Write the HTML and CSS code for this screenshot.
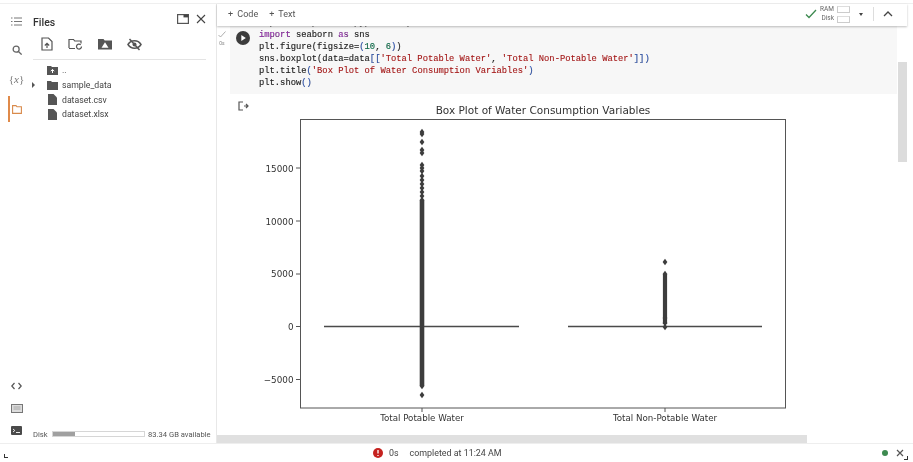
FILE: index.html
```html
<!DOCTYPE html>
<html lang="en">
<head>
<meta charset="utf-8">
<title>Files - Notebook</title>
<link rel="stylesheet" href="styles.css">
</head>
<body>
<div class="app">
  <div class="workspace">
    <nav class="rail">
      <div class="rail-top">
        <span class="rail-btn"><svg width="11" height="9" viewBox="0 0 11 9"><path d="M3 1h8M3 4.500h8M3 8h8M0 1h1.500M0 4.500h1.500M0 8h1.500" class="ic-line"/></svg></span>
        <span class="rail-btn"><svg width="10" height="10" viewBox="0 0 14 14"><circle cx="5.800" cy="5.800" r="4.200" class="ic-search"/><path d="M9 9l4.500 4.500" class="ic-search"/></svg></span>
        <span class="rail-btn rail-var">{<i>x</i>}</span>
        <span class="rail-btn rail-active"><svg width="10" height="9" viewBox="0 0 10 9"><path d="M.6 .6h3.400l1 1.200h4.400v6.600H.6z" class="ic-orange"/></svg></span>
      </div>
      <div class="rail-bottom">
        <span class="rail-btn"><svg width="11" height="8" viewBox="0 0 11 8"><path d="M3.500 1L.8 4l2.700 3M7.500 1l2.700 3-2.700 3" class="ic-line-b"/></svg></span>
        <span class="rail-btn"><svg width="12" height="9" viewBox="0 0 12 9"><rect x=".5" y=".5" width="11" height="8" class="ic-box"/><path d="M2.500 3h7M2.500 5h7" class="ic-thin"/></svg></span>
        <span class="rail-btn"><svg width="11" height="9" viewBox="0 0 11 9"><rect width="11" height="9" rx="1" fill="#4a4a4a"/><path d="M2 3l1.800 1.500L2 6" class="ic-white"/><path d="M5 6.500h4" class="ic-white"/></svg></span>
      </div>
    </nav>
    <aside class="panel">
      <header class="panel-head">
        <span class="panel-title">Files</span>
        <span class="panel-actions">
          <svg width="12" height="10" viewBox="0 0 12 10"><rect x=".6" y=".6" width="10.800" height="8.800" class="ic-box-d"/><rect x="6.500" y=".6" width="4.900" height="2.800" fill="#444"/></svg>
          <svg width="10" height="10" viewBox="0 0 10 10"><path d="M1 1l8 8M9 1l-8 8" class="ic-close"/></svg>
        </span>
      </header>
      <div class="file-tools">
        <svg width="12" height="14" viewBox="0 0 12 14"><path d="M1 1h6.500L11 4.500V13H1z" class="ic-box-d"/><path d="M6 11V6.500M3.800 8.500L6 6.300l2.200 2.200" class="ic-box-d"/></svg>
        <svg width="15" height="12" viewBox="0 0 15 12"><path d="M1 10V1.500h4.500l1.200 1.500H13v2.500M7 10.500H1" class="ic-box-d"/><path d="M13.500 8.500a2.500 2.500 0 1 1-.8-1.800" class="ic-box-d"/></svg>
        <svg width="14" height="12" viewBox="0 0 14 12"><path d="M0 1h5.500l1.200 1.500H14V11.500H0z" fill="#555"/><path d="M7 4.300L10.500 9.800h-7z" fill="#fff"/></svg>
        <svg width="15" height="13" viewBox="0 0 15 13"><path d="M1 6.500c3-5 10-5 13 0-3 5-10 5-13 0z" class="ic-eye"/><circle cx="7.500" cy="6.500" r="2" fill="#555"/><path d="M2.500 1l10 11" class="ic-eye"/></svg>
      </div>
      <ul class="tree">
        <li class="tree-row"><span class="twist"></span><svg width="11" height="9" viewBox="0 0 11 9"><path d="M0 0h4l1 1h6v8H0z" fill="#555"/><path d="M5.500 7V3.500M3.800 5.200L5.500 3.400l1.700 1.800" stroke="#fff" fill="none"/></svg><span>..</span></li>
        <li class="tree-row"><span class="twist twist-on"></span><svg width="11" height="9" viewBox="0 0 11 9"><path d="M0 0h4l1 1h6v8H0z" fill="#555"/></svg><span>sample_data</span></li>
        <li class="tree-row"><span class="twist"></span><svg width="9" height="11" viewBox="0 0 9 11"><path d="M0 0h5.500L9 3.500V11H0z" fill="#555"/></svg><span>dataset.csv</span></li>
        <li class="tree-row"><span class="twist"></span><svg width="9" height="11" viewBox="0 0 9 11"><path d="M0 0h5.500L9 3.500V11H0z" fill="#555"/></svg><span>dataset.xlsx</span></li>
      </ul>
      <div class="disk">
        <span class="disk-label">Disk</span>
        <span class="disk-bar"><span class="disk-fill"></span></span>
        <span>83.34 GB available</span>
      </div>
    </aside>
    <main class="notebook">
      <header class="toolbar">
        <span class="tb-btn">+ Code</span>
        <span class="tb-btn">+ Text</span>
        <span class="tb-right">
          <svg width="12" height="10" viewBox="0 0 12 10"><path d="M1 5.500l3 3L11 1" class="ic-check"/></svg>
          <span class="res-labels"><span>RAM</span><span>Disk</span></span>
          <span class="res-bars"><span class="res-bar"></span><span class="res-bar"></span></span>
          <span class="caret"></span>
          <span class="tb-divider"></span>
          <svg width="10" height="6" viewBox="0 0 10 6"><path d="M1 5l4-4 4 4" class="ic-chev"/></svg>
        </span>
      </header>
      <div class="scroller">
        <div class="content">
          <section class="cell-row">
            <div class="exec"><svg width="8" height="7" viewBox="0 0 8 7"><path d="M.5 4l2 2L7.500.5" class="ic-thin"/></svg><span>0s</span></div>
            <div class="cell">
              <div class="run"><svg width="14" height="14" viewBox="0 0 14 14"><circle cx="7" cy="7" r="7" fill="#3c3c3c"/><path d="M5.300 4l4.500 3-4.500 3z" fill="#fff"/></svg></div>
              <div class="code">
                <div class="code-line clip">import matplotlib.pyplot as plt</div>
                <div class="code-line"><b class="k">import</b> seaborn <b class="k">as</b> sns</div>
                <div class="code-line">plt.figure(figsize=<b class="p">(</b><b class="g">10</b>, <b class="g">6</b><b class="p">)</b>)</div>
                <div class="code-line">sns.boxplot(data=data<b class="p">[[</b><b class="s">'Total Potable Water'</b>, <b class="s">'Total Non-Potable Water'</b><b class="p">]])</b></div>
                <div class="code-line">plt.title<b class="p">(</b><b class="s">'Box Plot of Water Consumption Variables'</b><b class="p">)</b></div>
                <div class="code-line">plt.show<b class="p">()</b></div>
              </div>
            </div>
          </section>
          <section class="output">
            <div class="out-icon"><svg width="11" height="10" viewBox="0 0 11 10"><path d="M5 1H1v8h4M6 5h4M8 3l2 2-2 2" class="ic-box-d"/></svg></div>
            <svg class="plot" width="640" height="335" viewBox="257 97 640 335">
              <defs>
                <path id="d" d="M0 -3.300L2.400 0 0 3.300 -2.400 0z" fill="#3d3d3d"/>
              </defs>
              <text x="543" y="114" class="plot-title">Box Plot of Water Consumption Variables</text>
              <rect x="300.500" y="119.500" width="485" height="288.500" class="axes"/>
              <g class="ticks">
                <path d="M296 168h4M296 221h4M296 274h4M296 326.500h4M296 379.500h4M422 408v4M665 408v4"/>
              </g>
              <g class="ylab">
                <text x="293.500" y="171.500">15000</text>
                <text x="293.500" y="224.500">10000</text>
                <text x="293.500" y="277">5000</text>
                <text x="293.500" y="330">0</text>
                <text x="293.500" y="383">−5000</text>
              </g>
              <g class="xlab">
                <text x="422" y="421">Total Potable Water</text>
                <text x="665" y="421">Total Non-Potable Water</text>
              </g>
              <path d="M324 326.500h195M568 326.500h194" class="median"/>
              <use href="#d" x="422" y="132"/><use href="#d" x="422" y="134"/><use href="#d" x="422" y="142"/>
              <use href="#d" x="422" y="150"/><use href="#d" x="422" y="153"/><use href="#d" x="422" y="165"/><use href="#d" x="422" y="168"/><use href="#d" x="422" y="171"/>
              <use href="#d" x="422" y="176"/><use href="#d" x="422" y="180"/><use href="#d" x="422" y="184"/><use href="#d" x="422" y="188"/><use href="#d" x="422" y="192"/><use href="#d" x="422" y="196"/><use href="#d" x="422" y="200"/>
              <use href="#d" x="422" y="395"/><use href="#d" x="422" y="386"/>
              <path d="M422 200v186" class="col-a"/>
              <path d="M665 274v50" class="col-b"/>
              <use href="#d" x="665" y="262"/><use href="#d" x="665" y="274"/><use href="#d" x="665" y="318"/><use href="#d" x="665" y="323"/><use href="#d" x="665" y="327"/>
            </svg>
          </section>
        </div>
        <div class="vscroll"><span class="vthumb"></span></div>
      </div>
      <div class="hscroll"><span class="hthumb"></span></div>
    </main>
  </div>
  <footer class="status">
    <span class="status-mid">
      <svg width="10" height="10" viewBox="0 0 10 10"><circle cx="5" cy="5" r="5" fill="#c5221f"/><path d="M5 2v3.500M5 7v1" stroke="#fff" stroke-width="1.300"/></svg>
      <span class="status-time">0s</span>
      <span>completed at 11:24 AM</span>
    </span>
    <span class="status-right">
      <span class="dot"></span>
      <svg width="8" height="8" viewBox="0 0 8 8"><path d="M1 1l6 6M7 1l-6 6" class="ic-line-b"/></svg>
    </span>
    <span class="corner corner-l"></span>
    <span class="corner corner-r"></span>
  </footer>
</div>
</body>
</html>
```
FILE: styles.css
```css
* { box-sizing: border-box; }
html, body { margin: 0; height: 100%; background: #fff; overflow: hidden; }
body { font-family: Roboto, "Liberation Sans", sans-serif; color: #3c3c3c; }
svg { display: block; }
.app { width: 913px; height: 462px; display: flex; flex-direction: column; padding-top: 3px; filter: blur(.4px); }
.workspace { flex: 1; min-height: 0; display: flex; border-top: 1px solid #efefef; }

.ic-line { stroke: #777; stroke-width: 1; fill: none; }
.ic-line-b { stroke: #555; stroke-width: 1.200; fill: none; }
.ic-search { stroke: #666; stroke-width: 1.800; fill: none; }
.ic-orange { stroke: #d98a4b; stroke-width: 1.100; fill: none; }
.ic-box { stroke: #777; stroke-width: 1; fill: #ddd; }
.ic-box-d { stroke: #555; stroke-width: 1.200; fill: none; }
.ic-thin { stroke: #999; stroke-width: .8; fill: none; }
.ic-white { stroke: #fff; stroke-width: .9; fill: none; }
.ic-close { stroke: #444; stroke-width: 1.100; fill: none; }
.ic-eye { stroke: #555; stroke-width: 1.500; fill: none; }
.ic-check { stroke: #3d8a50; stroke-width: 1.300; fill: none; }
.ic-chev { stroke: #444; stroke-width: 1.300; fill: none; }

.rail { width: 33px; flex: none; display: flex; flex-direction: column; justify-content: space-between; padding: 5px 0 6px 8px; }
.rail-top, .rail-bottom { display: flex; flex-direction: column; }
.rail-top { gap: 5px; }
.rail-bottom { gap: 8px; }
.rail-btn { width: 17px; height: 14px; display: flex; align-items: center; justify-content: center; }
.rail-top .rail-btn { height: 24px; }
.rail-var { font: 11px "Liberation Serif", serif; color: #777; }
.rail-active { border-left: 2px solid #e08a4a; height: 26px !important; padding-right: 1px; }

.panel { width: 184px; flex: none; display: flex; flex-direction: column; border-right: 1px solid #e8e8e8; padding-right: 10px; }
.panel-head { display: flex; justify-content: space-between; align-items: center; height: 20px; margin-top: 8px; font-size: 10.500px; font-weight: 500; color: #333; }
.panel-actions { display: flex; gap: 7px; align-items: center; margin-top: -6px; margin-right: 0; }
.file-tools { display: flex; gap: 15px; align-items: center; padding: 0 0 6px 8px; height: 25px; margin-top: 3px; border-bottom: 1px solid #e4e4e4; }
.tree { list-style: none; margin: 3px 0 0 -3px; padding: 0; flex: 1; }
.tree-row { height: 14.700px; display: flex; align-items: center; gap: 4px; font-size: 8.700px; color: #444; }
.tree-row svg { width: 11px; flex: none; }
.twist { width: 13px; height: 6px; flex: none; position: relative; }
.twist-on::before { content: ""; position: absolute; left: 2px; top: 0; border-left: 3px solid #555; border-top: 3px solid transparent; border-bottom: 3px solid transparent; }
.disk { display: flex; align-items: center; font-size: 7.600px; color: #555; height: 12px; margin-bottom: 3px; white-space: nowrap; }
.disk-label { width: 19px; flex: none; }
.disk-bar { width: 93px; height: 6px; border: 1px solid #d6d6d6; display: block; flex: none; margin-right: 3px; }
.disk-fill { display: block; width: 22px; height: 100%; background: #a0a0a0; }

.notebook { flex: 1; min-width: 0; display: flex; flex-direction: column; }
.toolbar { height: 22px; flex: none; display: flex; align-items: center; gap: 11px; padding: 0 0 2px 11px; font-size: 9px; word-spacing: 2px; color: #555; box-shadow: 0 1px 2px rgba(0,0,0,.25); position: relative; z-index: 1; margin-right: 6px; }
.tb-btn { white-space: nowrap; }
.tb-right { margin-left: auto; display: flex; align-items: center; margin-right: 14px; color: #666; word-spacing: 0; }
.res-labels { display: flex; flex-direction: column; align-items: flex-end; font-size: 6.500px; line-height: 9px; margin: 0 3px; }
.res-bars { display: flex; flex-direction: column; gap: 3px; }
.res-bar { display: block; width: 13px; height: 7px; border: 1px solid #ccc; border-top-color: #ddd; }
.caret { border-left: 2.500px solid transparent; border-right: 2.500px solid transparent; border-top: 3px solid #444; margin: 0 10px 0 9px; }
.tb-divider { width: 1px; height: 14px; background: #ddd; margin-right: 9px; }

.scroller { flex: 1; min-height: 0; display: flex; padding-right: 6px; }
.content { flex: 1; min-width: 0; overflow: hidden; }
.vscroll { width: 9px; flex: none; margin-left: 1px; padding-top: 36px; }
.vthumb { display: block; height: 100px; background: #dcdcdc; }
.cell-row { display: flex; height: 68px; }
.exec { width: 13px; flex: none; display: flex; flex-direction: column; align-items: center; padding: 5px 3px 0 0; font-size: 5px; color: #888; gap: 2px; }
.cell { flex: 1; display: flex; background: #f7f7f7; height: 68px; overflow: hidden; }
.run { width: 29px; flex: none; padding: 5px 0 0 6px; }
.code { margin-top: -9px; font: 8.800px/12px "Liberation Mono", monospace; color: #222; -webkit-text-stroke: .15px #222; }
.code-line { height: 12px; white-space: pre; }
.clip { color: #777; }
.code b { font-weight: 400; }
.k { color: #a626c4; }
.s { color: #a31515; -webkit-text-stroke: .1px #a31515; }
.g { color: #098658; }
.p { color: #2a5bd0; }
.output { display: flex; padding-top: 3px; height: 338px; }
.out-icon { width: 40px; padding: 4px 0 0 21px; flex: none; }
.plot { flex: none; }
.plot text { font-family: "DejaVu Sans", sans-serif; fill: #333; }
.plot-title { font-size: 10.500px; text-anchor: middle; }
.axes { fill: #fff; stroke: #555; stroke-width: 1; }
.ticks path { stroke: #555; stroke-width: 1; }
.ylab text { font-size: 8.800px; text-anchor: end; }
.xlab text { font-size: 8.700px; text-anchor: middle; }
.median { stroke: #4a4a4a; stroke-width: 1.500; fill: none; }
.col-a { stroke: #3d3d3d; stroke-width: 4.600; fill: none; }
.col-b { stroke: #3d3d3d; stroke-width: 4.200; fill: none; }

.hscroll { height: 8px; flex: none; margin-right: 6px; }
.hthumb { display: block; width: 590px; height: 100%; background: #e0e0e0; }

.status { height: 19px; flex: none; position: relative; display: flex; align-items: center; border-top: 1px solid #eee; font-size: 8.900px; color: #444; }
.status-mid { position: absolute; left: 373px; display: flex; align-items: center; }
.status-time { margin: 0 11px 0 6px; }
.status-right { margin-left: auto; margin-right: 9px; display: flex; align-items: center; gap: 8px; }
.dot { width: 6px; height: 6px; border-radius: 50%; background: #3d8a50; }
.corner { position: absolute; width: 4px; height: 4px; }
.corner-l { left: 4px; top: 10px; border-left: 1px solid #333; border-bottom: 1px solid #333; }
.corner-r { right: 5px; top: 12px; border-right: 1px solid #333; border-bottom: 1px solid #333; }
```
